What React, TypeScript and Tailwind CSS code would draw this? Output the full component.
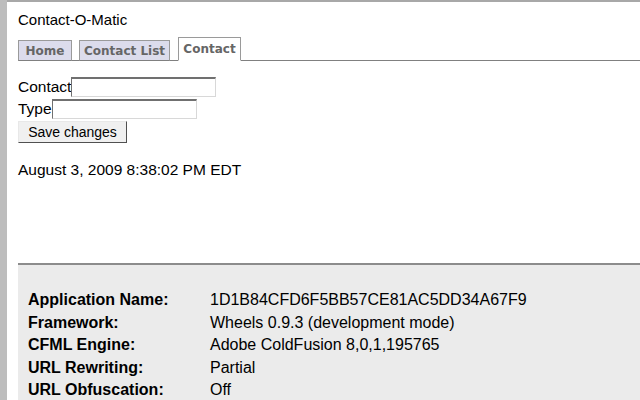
export default function App() {
  const info: [string, string][] = [
    ["Application Name:", "1D1B84CFD6F5BB57CE81AC5DD34A67F9"],
    ["Framework:", "Wheels 0.9.3 (development mode)"],
    ["CFML Engine:", "Adobe ColdFusion 8,0,1,195765"],
    ["URL Rewriting:", "Partial"],
    ["URL Obfuscation:", "Off"],
  ];

  return (
    <div className="flex w-[640px] h-[400px] overflow-hidden bg-white font-['Liberation_Sans',Arial,sans-serif] text-[15.5px] text-black">
      <div className="w-[7px] shrink-0 bg-[#bdbdbd]" />
      <div className="flex-1 flex flex-col border-t-2 border-[#a8a8a8]">
        <div className="pl-[11px]">
          <h1 className="mt-[9px] text-[15px] leading-[18px] font-normal">Contact-O-Matic</h1>

          {/* tabs */}
          <div className="mt-[8px] flex items-end gap-[7px] border-b border-[#808080] font-['DejaVu_Sans',Verdana,sans-serif] text-[12px] font-bold text-[#666]">
            <span className="mb-[-1px] h-[21px] w-[54px] justify-center flex items-center bg-[#dcdcec] border border-[#9a9a9a] border-b-[#808080]">
              Home
            </span>
            <span className="mb-[-1px] h-[21px] w-[91px] justify-center flex items-center bg-[#dcdcec] border border-[#9a9a9a] border-b-[#808080]">
              Contact List
            </span>
            <span className="mb-[-1px] ml-[1px] h-[24px] w-[63px] justify-center flex items-center bg-white border border-[#9a9a9a] border-b-white">
              Contact
            </span>
          </div>

          {/* form */}
          <form className="mt-[15px] flex flex-col items-start">
            <label className="flex items-center h-[22px] leading-[16px]">
              Contact
              <input className="w-[145px] h-[20px] border border-[#d8d8d8] border-t-[#707070] border-l-[#707070] border-t-2 bg-white" />
            </label>
            <label className="flex items-center h-[22px] leading-[16px]">
              Type
              <input className="w-[145px] h-[20px] border border-[#d8d8d8] border-t-[#707070] border-l-[#707070] border-t-2 bg-white" />
            </label>
            <button
              type="button"
              className="mt-[1px] h-[22px] w-[109px] text-[14px] bg-[#f0f0f0] border border-[#e8e8e8] border-r-[#505050] border-b-[#505050]"
            >
              Save changes
            </button>
          </form>

          <p className="mt-[18px] leading-[18px]">August 3, 2009 8:38:02 PM EDT</p>
        </div>

        {/* debug panel */}
        <div className="mt-[84px] ml-[11px] flex-1 bg-[#ebebeb] border-t-2 border-[#8c8c8c] pl-[10px] pt-[26px] text-[16px]">
          <div className="grid grid-cols-[182px_1fr] gap-y-[4px] leading-[18.5px]">
            {info.map(([k, v]) => (
              <div key={k} className="contents">
                <span className="font-bold">{k}</span>
                <span>{v}</span>
              </div>
            ))}
          </div>
        </div>
      </div>
    </div>
  );
}
